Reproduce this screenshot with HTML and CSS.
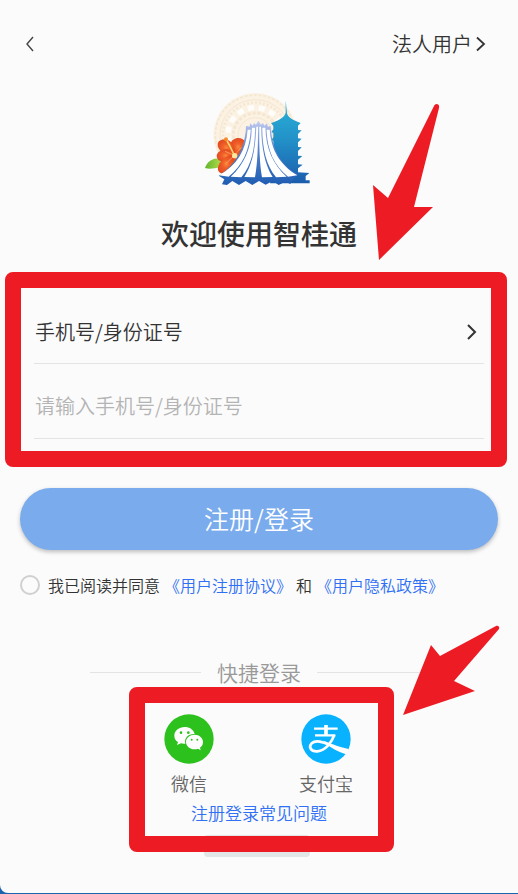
FILE: index.html
```html
<!DOCTYPE html>
<html lang="zh-CN">
<head>
<meta charset="utf-8">
<meta name="viewport" content="width=device-width, initial-scale=1">
<title>智桂通</title>
<link rel="stylesheet" href="styles.css">
</head>
<body>
<main class="page">
  <header class="topbar">
    <button class="icon-button" type="button" aria-label="返回">
      <svg width="10" height="18" viewBox="0 0 10 18"><path d="M8 2 2 9l6 7" fill="none" stroke="#444" stroke-width="1.4"/></svg>
    </button>
    <a class="user-type" href="#">法人用户
      <svg width="10" height="16" viewBox="0 0 10 16"><path d="M1 1.5 8 8l-7 6.5" fill="none" stroke="#333" stroke-width="1.8"/></svg>
    </a>
  </header>

  <section class="brand">
    <svg class="logo" viewBox="0 0 390 330" aria-hidden="true">
      <defs>
        <linearGradient id="tower" x1="0" y1="0" x2="0" y2="1"><stop offset="0" stop-color="#29b2d8"/><stop offset=".45" stop-color="#2393c9"/><stop offset="1" stop-color="#1b5cad"/></linearGradient>
        <linearGradient id="hall" x1="0" y1="0" x2="0" y2="1"><stop offset="0" stop-color="#c7cdf2"/><stop offset=".4" stop-color="#5c86cd"/><stop offset="1" stop-color="#1e5db3"/></linearGradient>
        <radialGradient id="petal"><stop offset="0" stop-color="#f98a3c"/><stop offset=".4" stop-color="#f0602a"/><stop offset="1" stop-color="#e34b20"/></radialGradient>
        <linearGradient id="leaf" x1="0" y1="0" x2="1" y2="0"><stop offset="0" stop-color="#62b52d"/><stop offset="1" stop-color="#b5dc4c"/></linearGradient>
      </defs>
      <circle cx="184" cy="150" r="126" fill="#fbf2e4"/>
      <g fill="none" stroke="#f5e6d0">
        <circle cx="184" cy="150" r="120" stroke-width="5" stroke-dasharray="9 5"/>
        <circle cx="184" cy="150" r="106" stroke-width="3"/>
        <circle cx="184" cy="150" r="97" stroke-width="8" stroke-dasharray="5 7"/>
        <circle cx="184" cy="150" r="66" stroke-width="9" stroke-dasharray="10 5"/>
        <circle cx="184" cy="150" r="52" stroke-width="3"/>
      </g>
      <circle cx="184" cy="150" r="82" fill="none" stroke="#fffdf9" stroke-width="16" stroke-dasharray="19 14"/>
      <path fill="url(#tower)" d="M275 46l4 38c2 12 14 20 41 30l-8 8v13l11 1-11 11v13l11 1-11 11v14l11 1-11 11v14l13 1-13 11v14l14 1-14 11v12l34 2-11 9v13h12v9H228l6-36V191l-5-1 9-9v-14l-6-1 6-9v-14l-6-1 6-9v-10l-7-9c28-9 41-19 44-31z"/>
      <path fill="url(#leaf)" d="M33 249c8-21 22-31 51-29l-4 27c-20 3-34 7-47 2z"/>
      <g fill="url(#petal)">
        <path d="M120 213c-19-19-15-50 9-54 20-3 31 14 28 31-3 15-19 26-37 23z"/>
        <path d="M120 211c-22 5-50-12-49-33 1-18 28-18 39-8 12 10 16 27 10 41z"/>
        <path d="M121 211c-10 20-39 26-50 11-10-15 8-28 23-29 13-1 23 7 27 18z"/>
        <path d="M120 208c5 19-5 53-26 57-17 4-26-8-21-22 5-17 28-33 47-35z"/>
        <path d="M119 207c18-14 38-19 48-5 9 14-6 41-21 49-16 8-32-16-27-44z"/>
      </g>
      <path d="M122 213 106 180l-9-16" fill="none" stroke="#ffd36a" stroke-width="5"/>
      <path d="M121 211l-28-12m28 13-26 24m27-23 14 20m-14-22 20-24" fill="none" stroke="#ffb768" stroke-width="2"/>
      <circle cx="96" cy="163" r="6" fill="#f68b2c"/>
      <circle cx="122" cy="212" r="8" fill="#ffe9a0"/>
      <path fill="url(#hall)" d="M158 123l8 2 3-10 7 7 4-8 6 5 7-12 8 12 6-5 4 8 8-7 3 10 8-2c3 64 28 119 84 145l-12 9-13 20-15-7-20 10-18-12-21 11-20-11-20 12-20-12-20 12-20-12-16 12-15-2 7-15-17-11c51-31 81-85 82-149z"/>
      <g fill="#fff">
        <path d="M161 134h9c-3 61-24 107-66 141l-29-4c54-31 81-75 86-137z"/>
        <path d="M174 128h9c0 62-9 111-41 149l-32-2c41-38 61-83 64-147z"/>
        <path d="M187 125h5c0 62-1 107-9 152l-32-1c24-38 33-84 36-151z"/>
        <path d="M196 125h5c2 63 11 113 35 151l-32 1c-7-40-9-92-8-152z"/>
        <path d="M205 128h9c2 64 23 109 64 147l-32 2c-30-37-41-87-41-149z"/>
        <path d="M218 134h9c5 62 30 104 83 137l-28 4c-42-34-63-80-64-141z"/>
      </g>
    </svg>
    <h1 class="title">欢迎使用智桂通</h1>
  </section>

  <form class="login">
    <div class="fields">
      <button class="field id-type" type="button">手机号/身份证号
        <svg width="10" height="16" viewBox="0 0 10 16"><path d="M1 1 8 8l-7 7" fill="none" stroke="#333" stroke-width="2"/></svg>
      </button>
      <input class="field account" type="text" aria-label="手机号/身份证号" placeholder="请输入手机号/身份证号">
      <span class="mark mark-fields"></span>
      <svg class="arrow arrow-fields" width="68" height="158" viewBox="372 103 68 158" aria-hidden="true"><path fill="#ed1c24" d="M379 260 373 185l15 13 46-92c1-3 6-3 5 2l-25 99h19z"/></svg>
    </div>
    <button class="submit" type="button">注册/登录</button>
    <div class="agreement">
      <input class="agree" id="agree" type="checkbox">
      <div class="terms"><label for="agree">我已阅读并同意</label><a href="#">《用户注册协议》</a><span>和</span><a href="#">《用户隐私政策》</a></div>
    </div>
  </form>

  <section class="quick">
    <h2 class="divider">快捷登录</h2>
    <div class="quick-box">
      <div class="providers">
        <button class="provider" type="button">
          <svg width="50" height="50" viewBox="0 0 150 150" aria-hidden="true">
            <circle cx="75" cy="75" r="74" fill="#2dc11e"/>
            <path fill="#fff" d="M62 39c-17 0-31 11-31 26 0 8 4 15 11 19l-3 9 12-5c4 1 8 2 13 1-4-17 9-30 28-29-3-13-16-21-30-21z"/>
            <path fill="#fff" d="M92 62c-15 0-26 10-26 22s11 22 26 22c4 0 7-1 10-2l8 5-2-8c6-4 9-10 9-17 0-12-11-22-25-22z"/>
            <g fill="#2dc11e"><circle cx="51" cy="56" r="4"/><circle cx="73" cy="56" r="4"/><circle cx="83" cy="77" r="3"/><circle cx="100" cy="77" r="3"/></g>
          </svg>
          <span>微信</span>
        </button>
        <button class="provider" type="button">
          <svg width="50" height="50" viewBox="0 0 150 150" aria-hidden="true">
            <circle cx="75" cy="75" r="74" fill="#08b2ff"/>
            <g fill="none" stroke="#fff">
              <path stroke-width="7" d="M39 44h71M42 64h61"/>
              <path stroke-width="11" d="M75 33v33"/>
              <path stroke-width="8" d="M100 63c-8 22-26 46-51 49-20 1-27-14-17-24 12-11 36-4 51 4"/>
            </g>
            <path fill="#fff" d="M68 80c19 7 40 17 75 25-2 6-4 11-8 16-23-6-44-19-62-33z"/>
          </svg>
          <span>支付宝</span>
        </button>
      </div>
      <a class="faq" href="#">注册登录常见问题</a>
      <span class="toast"></span>
      <span class="mark mark-quick"></span>
      <svg class="arrow arrow-quick" width="98" height="92" viewBox="402 624 98 92" aria-hidden="true"><path fill="#ed1c24" d="M403 715 431 645l9 11 56-30c2-1 4 1 3 3l-45 52 21 10z"/></svg>
    </div>
  </section>
</main>
</body>
</html>
```
FILE: styles.css
```css
* {
  box-sizing: border-box;
}

body {
  margin: 0;
  background: #1b65ae;
  color: #333;
  font-family: "Noto Sans CJK SC", sans-serif;
  font-size: 17px;
  font-weight: 350;
  line-height: 24px;
}

button,
input {
  font: inherit;
  color: inherit;
}

button {
  padding: 0;
  border: 0;
  background: none;
}

a {
  color: #2f70f5;
  text-decoration: none;
}

svg {
  display: block;
  flex: none;
}

.page {
  min-height: calc(100vh - 1px);
  padding: 0 20px;
  border-bottom-left-radius: 8px;
  background: #fbfbfb;
  overflow: hidden;
}

.topbar {
  display: flex;
  align-items: center;
  justify-content: space-between;
  height: 88px;
  padding: 0 12px 0 5px;
}

.user-type {
  display: flex;
  align-items: center;
  gap: 4px;
  color: #333;
  font-size: 20px;
}

.brand {
  display: flex;
  flex-direction: column;
  align-items: center;
}

.logo {
  width: 130px;
  height: 110px;
  margin-top: -3px;
}

.title {
  margin: 16px 0 0;
  font-size: 28px;
  font-weight: 500;
  line-height: 44px;
}

.fields {
  position: relative;
  display: flex;
  flex-direction: column;
  margin: 45px 0 49px;
  padding: 0 14px;
}

.field {
  width: 100%;
  border: 0;
  border-bottom: 1px solid #e4e4e4;
  border-radius: 0;
  background: none;
  font-size: 20px;
}

.id-type {
  display: flex;
  align-items: center;
  justify-content: space-between;
  height: 64px;
  padding: 0 7px 0 1px;
}

.account {
  height: 75px;
  padding: 8px 1px 0;
  outline: 0;
}

.account::placeholder {
  color: #b4b4b4;
  opacity: 1;
}

.mark {
  position: absolute;
  z-index: 1;
  border: 16px solid #ed1c24;
  border-radius: 8px;
  pointer-events: none;
}

.mark-fields {
  inset: -28px -9px -28px -15px;
}

.arrow {
  position: absolute;
  z-index: 2;
  pointer-events: none;
}

.arrow-fields {
  top: -197px;
  right: 58px;
}

.submit {
  width: 100%;
  height: 62px;
  padding-bottom: 2px;
  border-radius: 31px;
  background: #79abed;
  box-shadow: 0 2px 4px rgb(0 0 0 / 25%);
  color: #fff;
  font-size: 25px;
}

.agreement {
  display: flex;
  align-items: center;
  gap: 8px;
  margin-top: 23px;
}

.terms {
  display: flex;
  gap: 4px;
  font-size: 16px;
}

.agree {
  flex: none;
  width: 20px;
  height: 20px;
  margin: 0;
  appearance: none;
  border: 2px solid #d0d0d0;
  border-radius: 50%;
}

.agree:checked {
  background: #79abed;
}

.quick {
  margin-top: 60px;
}

.divider {
  display: flex;
  align-items: center;
  gap: 16px;
  margin: 0 70px;
  color: #999;
  font-size: 21px;
  font-weight: 350;
  line-height: 30px;
}

.divider::before,
.divider::after {
  content: "";
  flex: 1;
  height: 1px;
  background: #e4e4e4;
}

.quick-box {
  position: relative;
  display: flex;
  flex-direction: column;
  align-items: center;
  width: 232px;
  margin: 27px auto 0;
}

.providers {
  display: flex;
  gap: 83px;
  padding-right: 3px;
}

.provider {
  display: flex;
  flex-direction: column;
  align-items: center;
  gap: 7px;
  width: 54px;
  color: #666;
  font-size: 18px;
}

.faq {
  margin-top: 6px;
}

.toast {
  position: absolute;
  bottom: -32px;
  left: 61px;
  width: 106px;
  height: 22px;
  border-radius: 4px;
  background: #e1e6e6;
}

.mark-quick {
  inset: -27px -19px -27px -14px;
}

.arrow-quick {
  top: -90px;
  left: 259px;
}
```
